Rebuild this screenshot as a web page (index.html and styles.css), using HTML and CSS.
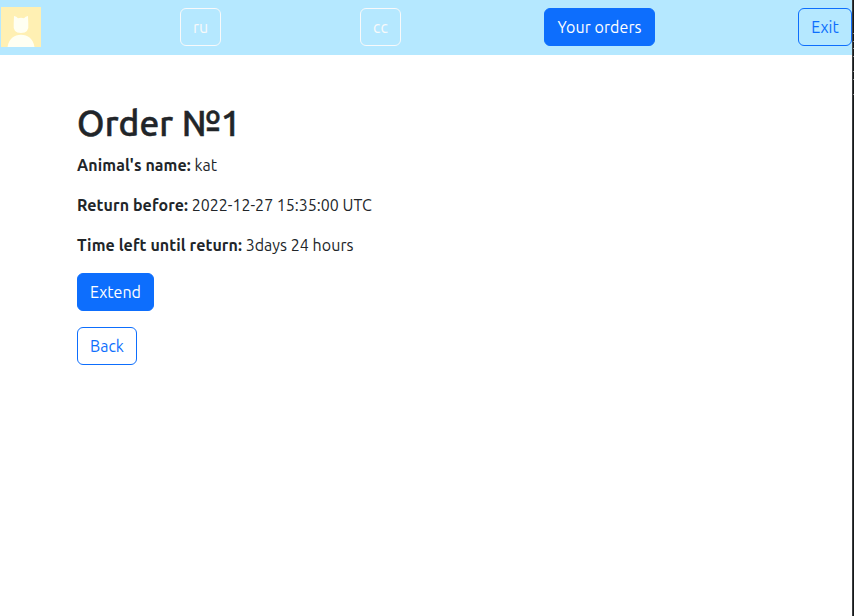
FILE: index.html
```html
<!DOCTYPE html>
<html lang="en">
<head>
<meta charset="utf-8">
<title>Order</title>
<link rel="stylesheet" href="styles.css">
</head>
<body>
<div class="page">
  <nav class="navbar">
    <svg class="avatar" viewBox="0 0 40 40" aria-hidden="true">
      <rect width="40" height="40" fill="#fff0b3"/>
      <path d="M13 9Q15.5 9.5 17 11.3Q20 10.4 23 11.3Q24.500 9.500 27 9L27.300 17Q28.500 26 20 26Q11.500 26 12.700 17Z" fill="#fffff2"/>
      <path d="M6.500 40C8 31.500 13 27.700 20 27.700S32 31.500 33.500 40Z" fill="#fffff2"/>
    </svg>
    <a class="btn btn-outline-light btn-small">ru</a>
    <a class="btn btn-outline-light btn-small">cc</a>
    <a class="btn btn-primary btn-orders">Your orders</a>
    <a class="btn btn-outline-primary btn-exit">Exit</a>
  </nav>
  <main class="content">
    <h1>Order №1</h1>
    <p><strong>Animal's name:</strong> <span>kat</span></p>
    <p><strong>Return before:</strong> <span>2022-12-27 15:35:00 UTC</span></p>
    <p><strong>Time left until return:</strong> <span class="remaining">3days 24 hours</span></p>
    <a class="btn btn-primary btn-extend">Extend</a>
    <a class="btn btn-outline-primary btn-back">Back</a>
  </main>
</div>
<div class="edge"></div>
</body>
</html>
```
FILE: styles.css
```css
* { box-sizing: border-box; }
body {
  margin: 0;
  height: 616px;
  display: flex;
  overflow: hidden;
  background: #fff;
  color: #212529;
  font: 16px/24px Ubuntu, "Noto Sans", sans-serif;
}
.page { width: 852px; flex: none; }
.edge {
  width: 2px;
  background:
    linear-gradient(#8b8d8f, #8b8d8f) 1px 33px / 1px 1px no-repeat,
    linear-gradient(#8b8d8f, #8b8d8f) 1px 41px / 1px 1px no-repeat,
    linear-gradient(#8b8d8f, #8b8d8f) 1px 48px / 1px 1px no-repeat,
    linear-gradient(#8b8d8f, #8b8d8f) 1px 56px / 1px 1px no-repeat,
    linear-gradient(#8b8d8f, #8b8d8f) 1px 71px / 1px 1px no-repeat,
    linear-gradient(#8b8d8f, #8b8d8f) 1px 79px / 1px 1px no-repeat,
    linear-gradient(#8b8d8f, #8b8d8f) 1px 94px / 1px 1px no-repeat,
    linear-gradient(90deg, #3b3d3f 50%, #161819 50%);
}
.navbar {
  display: flex;
  align-items: center;
  height: 55px;
  padding: 0 0 1px 1px;
  background: #b5e8ff;
}
.avatar { width: 40px; height: 40px; display: block; }
.btn {
  display: flex;
  align-items: center;
  justify-content: center;
  height: 38px;
  border: 1px solid transparent;
  border-radius: 6px;
  white-space: nowrap;
}
.btn-outline-light { color: #f8f9fa; border-color: #f8f9fa; }
.btn-primary { color: #fff; background: #0d6efd; border-color: #0d6efd; }
.btn-outline-primary { color: #0d6efd; border-color: #0d6efd; }
.btn-small { width: 41px; margin-left: 139px; }
.btn-orders { width: 111px; margin-left: 143px; letter-spacing: .06px; }
.btn-exit { width: 54px; margin-left: auto; }
.content { padding: 47px 77px 0; }
h1 {
  margin: 0 0 8px;
  font-size: 35.2px;
  line-height: 43px;
  font-weight: 500;
  letter-spacing: .15px;
  -webkit-text-stroke: .5px #212529;
  white-space: nowrap;
}
p { margin: 0 0 16px; white-space: nowrap; }
strong { font-weight: 700; letter-spacing: .08px; }
.remaining { letter-spacing: .04px; }
.btn-extend { width: 77px; margin-bottom: 16px; }
.btn-back { width: 60px; }
```
